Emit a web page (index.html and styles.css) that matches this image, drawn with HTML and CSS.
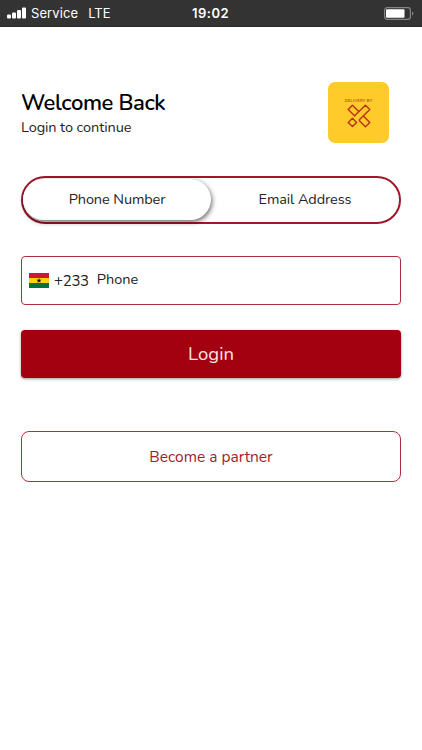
FILE: index.html
```html
<!DOCTYPE html>
<html lang="en">
<head>
    <meta charset="UTF-8">
    <meta name="viewport" content="width=device-width, initial-scale=1.0">
    <title>Login</title>
    <link rel="stylesheet" href="styles.css">
</head>
<body>
    <div class="status-bar">
        <div class="carrier">
            <svg class="signal" width="19" height="12" viewBox="0 0 19 12" fill="#fff">
                <rect x="0" y="7.5" width="4" height="4" rx="1"/>
                <rect x="5" y="5.5" width="4" height="6" rx="1"/>
                <rect x="10" y="3" width="4" height="8.5" rx="1"/>
                <rect x="15" y="0.5" width="4" height="11" rx="1"/>
            </svg>
            <span class="service">Service</span>
            <span class="network">LTE</span>
        </div>
        <div class="clock">19:02</div>
        <div class="battery">
            <svg width="30" height="13" viewBox="0 0 30 13">
                <rect x="0.6" y="0.6" width="25.8" height="11.8" rx="2.6" fill="none" stroke="#858585" stroke-width="1.2"/>
                <rect x="2" y="2.3" width="18.5" height="8.4" rx="1" fill="#fff"/>
                <path d="M28 4.5Q29.4 5 29.4 6.5T28 8.5Z" fill="#858585"/>
            </svg>
        </div>
    </div>

    <main class="container">
        <header class="header">
            <div class="titles">
                <h1>Welcome Back</h1>
                <p>Login to continue</p>
            </div>
            <div class="logo">
                <span class="logo-text">DELIVERY BY</span>
                <svg class="logo-mark" width="24" height="24" viewBox="0 0 24 24" fill="none" stroke="#b9321a" stroke-width="1.4" stroke-linejoin="round" stroke-linecap="round">
                    <path d="M7.6 11.8 1.2 5.4 5.4 1.2 11.8 7.6"/>
                    <path d="M7.6 11.8 18.4 1.2 22.8 5.4 12.4 15.8 12.4 16.8 18.4 22.8 22.8 18.4 16.4 12"/>
                    <path d="M1.2 18.4 5.4 14.2 9.6 18.4 5.4 22.6Z"/>
                </svg>
            </div>
        </header>

        <div class="tabs">
            <button class="tab active" type="button">Phone Number</button>
            <button class="tab" type="button">Email Address</button>
        </div>

        <div class="phone-field">
            <svg class="flag" width="20" height="15" viewBox="0 0 20 15">
                <rect width="20" height="5" fill="#cf1733"/>
                <rect y="5" width="20" height="5" fill="#fcd20f"/>
                <rect y="10" width="20" height="5" fill="#08703c"/>
                <path d="M10 5l.65 1.8h1.9l-1.5 1.1.6 1.9L10 8.7 8.35 9.8l.6-1.9-1.5-1.1h1.9Z" fill="#111"/>
            </svg>
            <span class="code">+233</span>
            <span class="placeholder">Phone</span>
        </div>

        <button class="login-btn" type="button">Login</button>
        <button class="partner-btn" type="button">Become a partner</button>
    </main>
</body>
</html>
```

FILE: styles.css
```css
body {
    font-family: Nunito, Lato, sans-serif;
    margin: 0;
    background-color: #fff;
    color: #222;
}
button {
    font-family: inherit;
    padding: 0;
    border: none;
    cursor: pointer;
}
.status-bar {
    display: grid;
    grid-template-columns: 1fr auto 1fr;
    align-items: center;
    box-sizing: border-box;
    height: 27px;
    padding: 0 8px 0 7px;
    background-color: #333;
    border-bottom: 1px solid #2a2a2a;
    color: #fff;
    font-family: Inter, sans-serif;
    font-size: 13px;
}
.carrier {
    display: flex;
    align-items: center;
}
.service {
    margin-left: 5px;
    letter-spacing: 0.1px;
}
.network {
    margin-left: 10px;
}
.clock {
    font-weight: 600;
    letter-spacing: 0.5px;
}
.battery {
    display: flex;
    justify-content: flex-end;
}
.container {
    padding: 55px 21px 0;
}
.header {
    display: flex;
    justify-content: space-between;
    height: 61px;
    padding-right: 12px;
}
.titles {
    padding-top: 7px;
}
h1 {
    margin: 0;
    color: #000;
    font-size: 22px;
    font-weight: 600;
    line-height: 28px;
    letter-spacing: -0.4px;
}
.titles p {
    margin: 0;
    font-size: 14.5px;
    line-height: 20px;
    letter-spacing: -0.1px;
}
.logo {
    display: flex;
    flex-direction: column;
    align-items: center;
    box-sizing: border-box;
    width: 61px;
    height: 61px;
    padding-top: 16px;
    border-radius: 7px;
    background-color: #ffcb2b;
}
.logo-text {
    color: #b55a16;
    font-size: 4px;
    font-weight: 700;
    line-height: 5px;
    letter-spacing: 0.2px;
    white-space: nowrap;
}
.logo-mark {
    margin-top: 1px;
}
.tabs {
    display: flex;
    box-sizing: border-box;
    height: 48px;
    margin-top: 33px;
    border: 2px solid #a0162b;
    border-radius: 24px;
}
.tab {
    flex: 1;
    padding-bottom: 2px;
    border-radius: 22px;
    background-color: transparent;
    color: #222;
    font-size: 14.5px;
    letter-spacing: -0.1px;
}
.tab.active {
    height: 41px;
    margin-top: 1px;
    background-color: #fff;
    box-shadow: 1px 2px 5px rgba(0, 0, 0, 0.6);
}
.phone-field {
    display: flex;
    align-items: center;
    box-sizing: border-box;
    height: 49px;
    margin-top: 32px;
    padding-left: 7px;
    border: 1px solid #ad2f40;
    border-radius: 4px;
}
.code {
    margin-left: 5px;
    font-size: 15px;
    letter-spacing: -0.3px;
}
.placeholder {
    margin: -3px 0 0 8px;
    font-size: 14.5px;
}
.login-btn {
    display: block;
    width: 100%;
    height: 48px;
    margin-top: 25px;
    border-radius: 4px;
    background-color: #a30010;
    box-shadow: 0 1px 3px rgba(0, 0, 0, 0.4);
    color: #f8e8e8;
    font-size: 18.5px;
}
.partner-btn {
    display: block;
    width: 100%;
    height: 51px;
    margin-top: 53px;
    border: 1px solid #ad2f40;
    border-radius: 8px;
    background-color: #fff;
    color: #a31b2e;
    font-size: 15.5px;
}
```
